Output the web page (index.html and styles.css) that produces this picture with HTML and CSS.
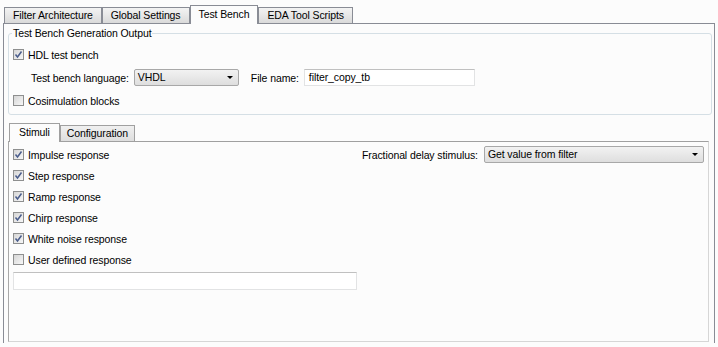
FILE: index.html
```html
<!DOCTYPE html>
<html lang="en">
<head>
  <meta charset="UTF-8">
  <title>Test Bench</title>
  <link rel="stylesheet" href="styles.css">
</head>
<body>
  <div class="tabbar">
    <div class="tab">Filter Architecture</div>
    <div class="tab">Global Settings</div>
    <div class="tab active">Test Bench</div>
    <div class="tab">EDA Tool Scripts</div>
  </div>

  <div class="panel">
    <fieldset class="group">
      <legend>Test Bench Generation Output</legend>
      <div class="row">
        <span class="check"><svg viewBox="0 0 9 9"><polyline points="1.5,4.5 3.5,7 7.5,1.5"/></svg></span>
        HDL test bench
      </div>
      <div class="row lang-row">
        <span>Test bench language:</span>
        <div class="select lang-select">VHDL</div>
        <span class="file-label">File name:</span>
        <div class="textbox file-box">filter_copy_tb</div>
      </div>
      <div class="row">
        <span class="check"></span>
        Cosimulation blocks
      </div>
    </fieldset>

    <div class="subtabbar">
      <div class="subtab active">Stimuli</div>
      <div class="subtab">Configuration</div>
    </div>

    <div class="subpanel">
      <div class="stim-list">
        <div class="row"><span class="check"><svg viewBox="0 0 9 9"><polyline points="1.5,4.5 3.5,7 7.5,1.5"/></svg></span>Impulse response</div>
        <div class="row"><span class="check"><svg viewBox="0 0 9 9"><polyline points="1.5,4.5 3.5,7 7.5,1.5"/></svg></span>Step response</div>
        <div class="row"><span class="check"><svg viewBox="0 0 9 9"><polyline points="1.5,4.5 3.5,7 7.5,1.5"/></svg></span>Ramp response</div>
        <div class="row"><span class="check"><svg viewBox="0 0 9 9"><polyline points="1.5,4.5 3.5,7 7.5,1.5"/></svg></span>Chirp response</div>
        <div class="row"><span class="check"><svg viewBox="0 0 9 9"><polyline points="1.5,4.5 3.5,7 7.5,1.5"/></svg></span>White noise response</div>
        <div class="row"><span class="check"></span>User defined response</div>
        <div class="textbox user-box"></div>
      </div>
      <div class="delay">
        <span>Fractional delay stimulus:</span>
        <div class="select delay-select">Get value from filter</div>
      </div>
    </div>
  </div>
</body>
</html>
```

FILE: styles.css
```css
* {
  box-sizing: border-box;
}

body {
  margin: 0;
  height: 347px;
  overflow: hidden;
  background: #fcfcfc;
  color: #000;
  font: 10.5px "Liberation Sans", Arial, sans-serif;
  letter-spacing: -0.1px;
}

/* main tabs */
.tabbar {
  display: flex;
  align-items: flex-end;
  height: 24px;
  padding-left: 4px;
}

.tab {
  height: 16px;
  line-height: 15px;
  margin-bottom: 1px;
  padding: 0 8px;
  border: 1px solid #898c95;
  border-bottom: none;
  background: linear-gradient(#f3f3f3, #dadada);
  white-space: nowrap;
}

.tab.active {
  position: relative;
  z-index: 1;
  height: 19px;
  line-height: 17px;
  margin-bottom: 0;
  padding: 0 8px;
  background: #fcfcfc;
}

.panel {
  height: 320px;
  margin: -1px 3px 0 3px;
  border: 1px solid #898c95;
  border-bottom: none;
}

/* group box */
.group {
  margin: 2px 2px 0 4px;
  padding: 4px 4px 3px 4px;
  min-width: 0;
  border: 1px solid #d5dfe5;
  border-radius: 3px;
}

.group legend {
  margin-left: -1px;
  padding: 0 1px;
  line-height: 14px;
}

.row {
  display: flex;
  align-items: center;
  height: 21px;
  white-space: nowrap;
}

.lang-row {
  height: 25px;
  padding-left: 18px;
}

.check {
  display: inline-flex;
  align-items: center;
  justify-content: center;
  width: 11px;
  height: 11px;
  margin-right: 4px;
  border: 1px solid #8e8f8f;
  background: linear-gradient(135deg, #d6d6d6, #f7f7f7);
}

.check svg {
  width: 9px;
  height: 9px;
  fill: none;
  stroke: #4a5d8c;
  stroke-width: 1.5;
}

/* fake controls */
.select {
  position: relative;
  height: 17px;
  line-height: 15px;
  padding-left: 3px;
  border: 1px solid #a8a8a8;
  border-radius: 2px;
  background: linear-gradient(#f2f2f2, #dedede);
}

.select::after {
  content: '';
  position: absolute;
  right: 5px;
  top: 6px;
  border-left: 3px solid transparent;
  border-right: 3px solid transparent;
  border-top: 3px solid #000;
}

.lang-select {
  width: 105px;
  margin-left: 5px;
}

.file-label {
  margin-left: 12px;
}

.textbox {
  height: 17px;
  line-height: 15px;
  padding-left: 4px;
  background: #fff;
  border: 1px solid #e2e3e4;
  border-top-color: #c0c0c0;
}

.file-box {
  width: 171px;
  margin-left: 5px;
}

/* inner tabs */
.subtabbar {
  display: flex;
  align-items: flex-end;
  height: 27px;
  margin-left: 4px;
  padding-left: 1px;
}

.subtab {
  height: 16px;
  line-height: 15px;
  margin-bottom: 1px;
  padding: 0 6px;
  border: 1px solid #a0a0a0;
  border-bottom: none;
  background: linear-gradient(#f0f0f0, #dedede);
  white-space: nowrap;
}

.subtab.active {
  position: relative;
  z-index: 1;
  height: 19px;
  line-height: 16px;
  margin-bottom: 0;
  padding: 0 9px;
  background: #fcfcfc;
}

.subpanel {
  display: grid;
  grid-template-columns: 344px 1fr;
  align-items: start;
  height: 201px;
  margin: -1px 5px 0 4px;
  padding: 2px 4px 0 4px;
  border: 1px solid #d6d6d6;
  border-top-color: #a0a0a0;
  border-left-color: #a8a8a8;
}

.user-box {
  height: 18px;
  margin-top: 2px;
}

.delay {
  display: flex;
  align-items: center;
  height: 21px;
  padding-left: 5px;
  white-space: nowrap;
}

.delay-select {
  flex: 1;
  margin-left: 6px;
}
```
